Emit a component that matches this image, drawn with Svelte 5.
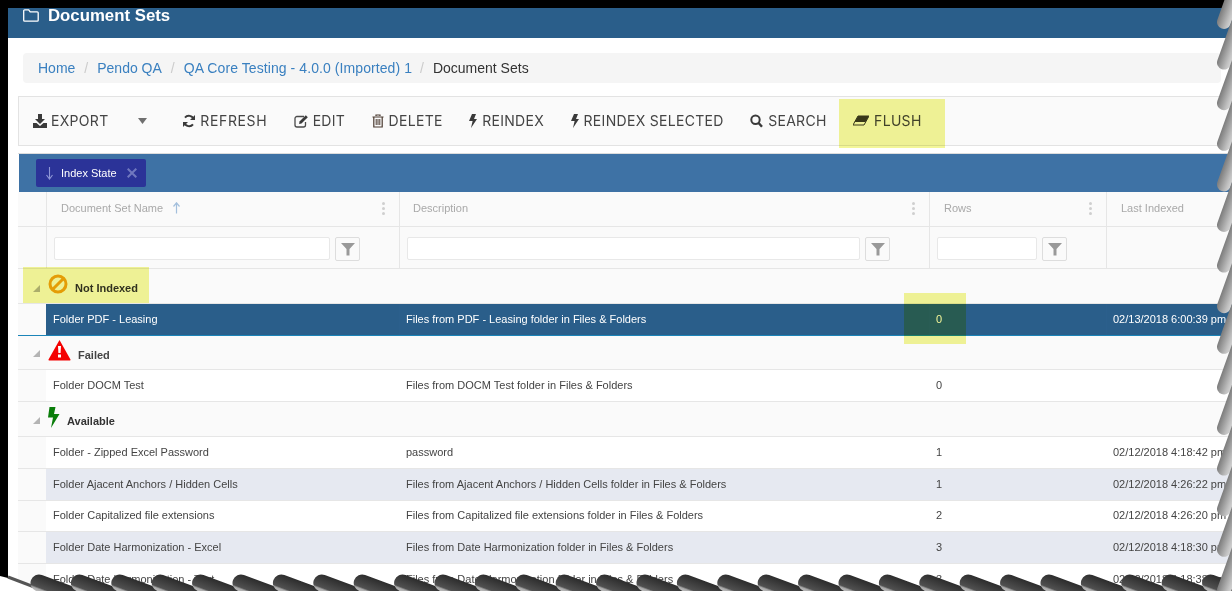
<script>
  const tools = [
    { id: 'refresh', label: 'REFRESH', cls: 'wide' },
    { id: 'edit', label: 'EDIT', cls: 'tight' },
    { id: 'trash', label: 'DELETE', cls: '' },
    { id: 'bolt', label: 'REINDEX', cls: '' },
    { id: 'bolt', label: 'REINDEX SELECTED', cls: '' },
    { id: 'search', label: 'SEARCH', cls: '' },
    { id: 'eraser', label: 'FLUSH', cls: '' }
  ];
  const cols = [
    { name: 'Document Set Name', sort: true, menu: true, filter: true, cls: 'c1' },
    { name: 'Description', menu: true, filter: true, cls: 'c2' },
    { name: 'Rows', menu: true, filter: true, cls: 'c3' },
    { name: 'Last Indexed', cls: 'c4' }
  ];
  const available = [
    ['Folder - Zipped Excel Password', 'password', '1', '02/12/2018 4:18:42 pm', 32],
    ['Folder Ajacent Anchors / Hidden Cells', 'Files from Ajacent Anchors / Hidden Cells folder in Files & Folders', '1', '02/12/2018 4:26:22 pm', 32],
    ['Folder Capitalized file extensions', 'Files from Capitalized file extensions folder in Files & Folders', '2', '02/12/2018 4:26:20 pm', 31],
    ['Folder Date Harmonization - Excel', 'Files from Date Harmonization folder in Files & Folders', '3', '02/12/2018 4:18:30 pm', 32],
    ['Folder Date Harmonization - Text', 'Files from Date Harmonization folder in Files & Folders', '3', '02/12/2018 4:18:38 pm', 32]
  ];
  const rightTeeth = Array.from({ length: 15 }, (_, i) => 28 + i * 40.6);
  const bottomTeeth = Array.from({ length: 30 }, (_, i) => 39 + i * 40.4);
</script>

{#snippet toolIcon(id)}
  {#if id === 'refresh'}
    <svg class="ti" width="14" height="14" viewBox="0 0 14 14"><path d="M11.6 5.2A5 5 0 0 0 3 3.6" fill="none" stroke="#3a3a3a" stroke-width="2"/><path d="M13 1v5H8z" fill="#3a3a3a"/><path d="M2.4 8.8A5 5 0 0 0 11 10.4" fill="none" stroke="#3a3a3a" stroke-width="2"/><path d="M1 13V8h5z" fill="#3a3a3a"/></svg>
  {:else if id === 'edit'}
    <svg class="ti" width="15" height="14" viewBox="0 0 15 14"><path d="M10 2.500H3a2 2 0 0 0-2 2V11a2 2 0 0 0 2 2h6.500a2 2 0 0 0 2-2V8" fill="none" stroke="#4a4a4a" stroke-width="1.300"/><path d="M5.500 7.500 11.800 1.200l2 2L7.500 9.500l-2.400.4z" fill="#3a3a3a"/></svg>
  {:else if id === 'trash'}
    <svg class="ti" width="12" height="14" viewBox="0 0 12 14"><path d="M4 2V1h4v1M.5 3h11M1.800 3.200V13h8.400V3.200" fill="none" stroke="#4a3a30" stroke-width="1.200"/><path d="M4.200 5v6M6 5v6M7.800 5v6" stroke="#4a3a30" stroke-width="1"/></svg>
  {:else if id === 'bolt'}
    <svg class="ti" width="8" height="14" viewBox="0 0 8 14"><path d="M3 0h4L5 5h3L2 14l1.600-7H0z" fill="#3a3a3a"/></svg>
  {:else if id === 'search'}
    <svg class="ti" width="13" height="14" viewBox="0 0 13 14"><circle cx="5.500" cy="5.800" r="4.200" fill="none" stroke="#3a3a3a" stroke-width="2"/><path d="m8.600 9 3.400 3.800" stroke="#3a3a3a" stroke-width="2.400"/></svg>
  {:else if id === 'eraser'}
    <svg class="ti" width="16" height="12" viewBox="0 0 16 12"><path d="M5 1h11L11 10H0z" fill="none" stroke="#3a3a2a" stroke-width="1"/><path d="M5 1h11l-3.500 6H1.600z" fill="#3a3a2a"/></svg>
  {/if}
{/snippet}

{#snippet funnel()}
  <svg width="14" height="14" viewBox="0 0 14 14"><path d="M0 1h14L8.500 7v6.500h-3V7z" fill="#999"/></svg>
{/snippet}

{#snippet row(r, kind)}
  <div class="row data {kind}" style="height:{r[4]}px">
    <div class="gut"></div>
    <div class="cell c1">{r[0]}</div>
    <div class="cell c2">{r[1]}</div>
    <div class="cell c3">{r[2]}</div>
    <div class="cell c4">{r[3]}</div>
  </div>
{/snippet}

{#snippet expander()}
  <svg class="exp" width="7" height="7" viewBox="0 0 7 7"><path d="M7 0v7H0z" fill="#b4b4b4"/></svg>
{/snippet}

<div class="root">
  <div class="page">
    <header class="title">
      <svg width="16" height="13" viewBox="0 0 16 13"><path d="M1.700.8h4l1.500 2h7a1 1 0 0 1 1 1v7.400a1 1 0 0 1-1 1H1.700a1 1 0 0 1-1-1V1.800a1 1 0 0 1 1-1z" fill="none" stroke="#fff" stroke-width="1.300"/></svg>
      <h1>Document Sets</h1>
    </header>

    <nav class="crumbs">
      <a href="#a">Home</a><span class="sep">/</span>
      <a href="#a">Pendo QA</a><span class="sep">/</span>
      <a class="long" href="#a">QA Core Testing - 4.0.0 (Imported) 1</a><span class="sep">/</span>
      <span class="cur">Document Sets</span>
    </nav>

    <div class="toolbar">
      <span class="tool first">
        <svg class="ti" width="14" height="14" viewBox="0 0 14 14"><path d="M5 0h4v5h3L7 10 2 5h3z" fill="#3a3a3a"/><path d="M0 9h3.500L7 12l3.500-3H14v5H0z" fill="#3a3a3a"/></svg>
        EXPORT
      </span>
      <svg class="caret" width="9" height="6" viewBox="0 0 9 6"><path d="M0 0h9L4.500 6z" fill="#6f6f6f"/></svg>
      {#each tools as t}
        <span class="tool {t.cls}">{@render toolIcon(t.id)}{t.label}</span>
      {/each}
    </div>

    <section class="grid">
      <div class="groupbar">
        <div class="chip">
          <svg width="9" height="14" viewBox="0 0 9 14"><path d="M4.500 1v11M1.500 9 4.500 13 7.500 9" fill="none" stroke="#8f97d6" stroke-width="1.100"/></svg>
          <span>Index State</span>
          <svg width="10" height="10" viewBox="0 0 10 10"><path d="m.7.7 8.600 8.600M9.300.7.700 9.300" stroke="#7078bf" stroke-width="2"/></svg>
        </div>
      </div>

      <div class="row headrow">
        <div class="gut"></div>
        {#each cols as c}
          <div class="cell {c.cls}">
            <span>{c.name}</span>
            {#if c.sort}
              <svg class="sort" width="7" height="12" viewBox="0 0 7 12"><path d="M3.500 11.500V1M.5 4.500 3.500.8l3 3.700" fill="none" stroke="#a3bfdc" stroke-width="1.200"/></svg>
            {/if}
            {#if c.menu}<span class="kebab"><i></i><i></i><i></i></span>{/if}
          </div>
        {/each}
      </div>

      <div class="row filterrow">
        <div class="gut"></div>
        {#each cols as c}
          <div class="cell {c.cls}">
            {#if c.filter}
              <input type="text" aria-label={c.name} />
              <button aria-label="Filter">{@render funnel()}</button>
            {/if}
          </div>
        {/each}
      </div>

      <div class="group g1">
        {@render expander()}
        <svg class="gi" width="20" height="20" viewBox="0 0 20 20"><circle cx="10" cy="10" r="8" fill="none" stroke="#f0a30a" stroke-width="3"/><path d="M15.500 4.500 4.500 15.500" stroke="#f0a30a" stroke-width="3"/></svg>
        <b>Not Indexed</b>
      </div>
      {@render row(['Folder PDF - Leasing', 'Files from PDF - Leasing folder in Files & Folders', '0', '02/13/2018 6:00:39 pm', 32], 'selected')}

      <div class="group g2">
        {@render expander()}
        <svg class="gi" width="23" height="22" viewBox="0 0 23 22"><path d="M11.500 1 22.500 20.500a.8.800 0 0 1-.7 1H1.200a.8.800 0 0 1-.7-1z" fill="#f40000"/><path d="M10 7h3l-.4 7h-2.200z" fill="#fff"/><rect x="10" y="15.500" width="3" height="3" fill="#fff"/></svg>
        <b>Failed</b>
      </div>
      {@render row(['Folder DOCM Test', 'Files from DOCM Test folder in Files & Folders', '0', '', 32], 'odd')}

      <div class="group g3">
        {@render expander()}
        <svg class="gi" width="12" height="21" viewBox="0 0 12 21"><path d="M1.500 0h6L6 7h5.500L3 21l2-10.500H0z" fill="#0a7d0a"/></svg>
        <b>Available</b>
      </div>
      {#each available as r, i}
        {@render row(r, i % 2 ? 'even' : 'odd')}
      {/each}
    </section>
  </div>

  <div class="mark m1"></div>
  <div class="mark m2"></div>
  <div class="mark m3"></div>

  <svg class="torn" width="1232" height="591" viewBox="0 0 1232 591" aria-hidden="true">
    <defs>
      <linearGradient id="gr" gradientUnits="userSpaceOnUse" x1="1216" y1="-2" x2="1236" y2="5">
        <stop offset="0" stop-color="#808080"/>
        <stop offset=".45" stop-color="#c0c0c0"/>
        <stop offset="1" stop-color="#ffffff"/>
      </linearGradient>
      <linearGradient id="gb" gradientUnits="userSpaceOnUse" x1="26" y1="17.500" x2="20" y2="33.500">
        <stop offset="0" stop-color="#2c2c2c"/>
        <stop offset=".75" stop-color="#505050"/>
        <stop offset=".85" stop-color="#a8a8a8"/>
        <stop offset="1" stop-color="#bcbcbc"/>
      </linearGradient>
    </defs>
    <path d="M0 576 8 578 42 591H0z" fill="#fff"/>
    <path d="M8 577 42 590" stroke="#555" stroke-width="3"/>
    {#each bottomTeeth as x}
      <g transform="translate({x} 566)">
        <line x1="0" y1="17" x2="46" y2="34" stroke="url(#gb)" stroke-width="17" stroke-linecap="round" />
      </g>
    {/each}
    {#each rightTeeth as y}
      <g transform="translate(0 {y})">
        <line x1="1224" y1="-6" x2="1239" y2="-48" stroke="url(#gr)" stroke-width="14" stroke-linecap="round"/>
      </g>
    {/each}
  </svg>
</div>

<style>
  :global(body) { margin: 0; background: #000; }
  .root {
    position: relative; width: 1232px; height: 591px; overflow: hidden;
    background: #000; padding: 8px 0 0 8px; box-sizing: border-box;
    font-family: "Liberation Sans", Arial, sans-serif; color: #333;
  }
  .page { background: #fff; height: 583px; width: 1240px; }
  .title {
    height: 30px; background: #2a5e8a; color: #fff; display: flex; align-items: flex-start;
    padding-left: 15px; gap: 9px; box-sizing: border-box;
  }
  .title svg { margin-top: 1px; }
  .title h1 { margin: 0; font-size: 16.800px; line-height: 16px; font-weight: bold; }
  .crumbs {
    margin: 15px 0 0 15px; width: 1198px; height: 30px; background: #f5f5f5; border-radius: 4px;
    display: flex; align-items: center; padding-left: 15px; box-sizing: border-box; font-size: 14px;
  }
  .crumbs a { color: #3a80c0; text-decoration: none; }
  .crumbs .long { letter-spacing: .08px; }
  .sep { color: #ccc; margin: 0 9px; }
  .crumbs .long + .sep { margin: 0 9px 0 8px; }
  .cur { color: #333; }
  .toolbar {
    margin: 13px 0 0 10px; width: 1230px; height: 50px; box-sizing: border-box;
    background: #fafafa; border: 1px solid #e3e3e3; display: flex; align-items: center;
    padding-left: 14px; font-family: Inter, "Liberation Sans", sans-serif; font-size: 14px; color: #444;
    gap: 26.400px; letter-spacing: .31px; padding-bottom: 1px;
  }
  .tool { display: inline-flex; align-items: center; gap: 5px; white-space: nowrap; }
  .tool.first { gap: 4px; }
  .tool.wide { gap: 4px; letter-spacing: .63px; }
  .tool.tight { gap: 4px; }
  .ti { flex: none; }
  .caret { margin: 0 8.500px 0 3.500px; }
  .grid { margin: 7px 0 0 10px; width: 1230px; border-top: 1px solid #ddd; }
  .groupbar {
    height: 38px; background: #3e72a5; margin-left: 1px; padding: 5px 0 0 17px; box-sizing: border-box;
  }
  .chip {
    width: 110px; height: 28px; background: #2b3398; border-radius: 2px; display: flex; align-items: center;
    padding-left: 9px; box-sizing: border-box; color: #fff; font-size: 11px;
  }
  .chip span { margin: 0 10px 0 7px; white-space: nowrap; }
  .row {
    display: grid; grid-template-columns: 29px 353px 530px 177px 1fr;
    box-sizing: border-box; border-bottom: 1px solid #e6e6e6; font-size: 11px; color: #444;
  }
  .row.data { grid-template-columns: 28px 354px 530px 177px 1fr; }
  .gut { background: #fafafa; }
  .cell { display: flex; align-items: center; white-space: nowrap; overflow: hidden; box-sizing: border-box; }
  .data .cell { padding: 0 0 2px 6px; }
  .data .c1 { padding-left: 7px; }
  .headrow { height: 35px; background: #fafafa; }
  .headrow .gut, .filterrow .gut { border-right: 1px solid #e6e6e6; }
  .headrow .cell { color: #a9a9a9; padding: 0 0 2px 14px; border-right: 1px solid #e6e6e6; }
  .headrow .c2 { padding-left: 13px; }
  .sort { margin-left: 10px; }
  .kebab { margin-left: auto; margin-right: 14px; display: flex; flex-direction: column; gap: 2px; }
  .kebab i { width: 3px; height: 3px; background: #cfcfcf; border-radius: 50%; display: block; }
  .filterrow { height: 42px; background: #fafafa; }
  .filterrow .cell { border-right: 1px solid #e6e6e6; padding: 2px 0 0 7px; }
  .filterrow input {
    height: 23px; box-sizing: border-box; border: 1px solid #e8e8e8; border-radius: 2px; background: #fff; padding: 0;
    flex: none; outline: none;
  }
  .filterrow .c1 input { width: 276px; }
  .filterrow .c2 input { width: 453px; }
  .filterrow .c3 input { width: 100px; }
  .filterrow button {
    width: 25px; height: 24px; margin-left: 5px; background: #fafafa; border: 1px solid #ddd; border-radius: 2px; padding: 0;
    display: flex; align-items: center; justify-content: center; flex: none;
  }
  .group {
    background: #fafafa; border-bottom: 1px solid #e6e6e6; display: flex; align-items: center; box-sizing: border-box;
    padding-left: 15px; font-size: 11px; color: #333;
  }
  .group b { font-weight: bold; }
  .exp { flex: none; margin-right: 8px; }
  .g1 { height: 35px; }
  .g1 .gi { margin: -5px 7px 0 0; }
  .g1 b { margin-top: 3px; }
  .g1 .exp { margin-top: 4px; }
  .g2 { height: 34px; }
  .g2 .gi { margin: -6px 7px 0 0; }
  .g2 b { margin-top: 5px; color: #444; }
  .g2 .exp { margin-top: 1px; }
  .g3 { height: 35px; }
  .g3 .gi { margin: -3px 7px 0 0; }
  .g3 b { margin-top: 3px; }
  .g3 .exp { margin-top: 2px; }
  .selected { background: #2a5e8a; color: #fff; border-bottom: 1px solid #1b84b8; }
  .selected .cell { border-right: 1px solid #2b5f8c; }
  .odd { background: #fff; }
  .even { background: #e6e9f1; }
  .mark { position: absolute; background: #f3f698; mix-blend-mode: multiply; }
  .m1 { left: 839px; top: 99px; width: 106px; height: 49px; }
  .m2 { left: 23px; top: 267px; width: 126px; height: 36px; }
  .m3 { left: 904px; top: 293px; width: 62px; height: 51px; }
  .torn { position: absolute; left: 0; top: 0; pointer-events: none; }
</style>
